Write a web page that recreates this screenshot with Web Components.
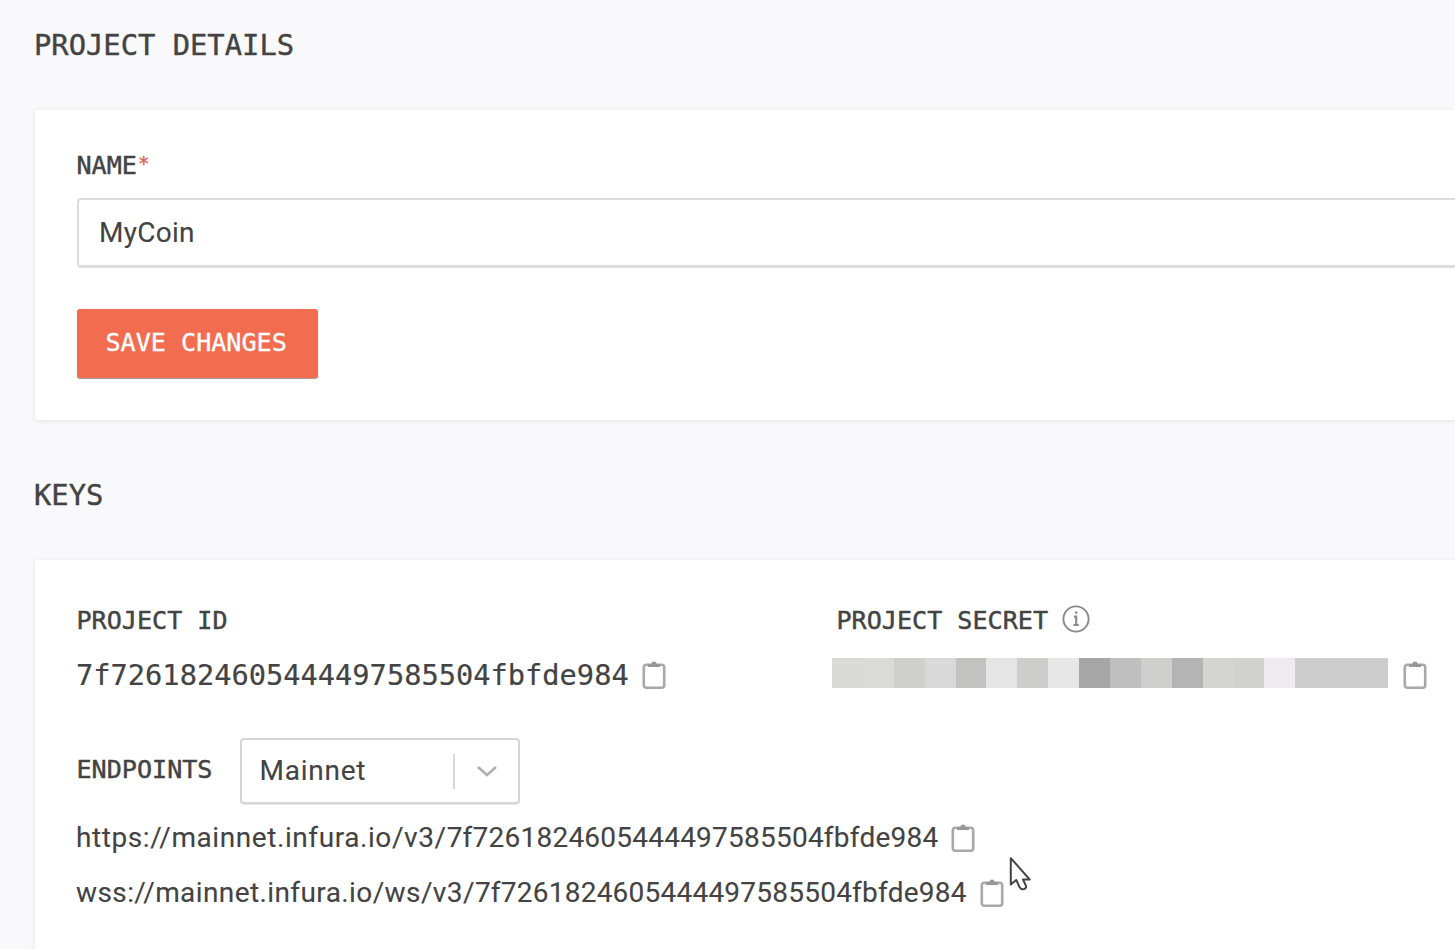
<!DOCTYPE html>
<html lang="en">
<head>
<meta charset="utf-8">
<title>Project settings</title>
<style>
html, body { margin: 0; height: 949px; overflow: hidden; background: #f9f8fa; }
</style>
</head>
<body>
<settings-page></settings-page>
<script>
const define = (name, html) => {
  const t = document.createElement('template');
  t.innerHTML = html;
  customElements.define(name, class extends HTMLElement {
    constructor() {
      super();
      this.attachShadow({ mode: 'open' }).append(t.content.cloneNode(true));
    }
  });
};

define('section-title', `<style>
:host { display: block; margin-left: -1px; font: 28.8px/40px "DejaVu Sans Mono", monospace; color: #434343; white-space: pre; -webkit-text-stroke: .4px; }
</style><slot></slot>`);

define('panel-card', `<style>
:host { display: block; box-sizing: border-box; background: #fff; padding: 40px 0 41px 42px; border-radius: 2px 0 0 2px; box-shadow: 0 1px 5px rgba(60,50,70,.11); }
</style><slot></slot>`);

define('field-label', `<style>
:host { display: block; margin-left: -.5px; font: 25.1px/32px "DejaVu Sans Mono", monospace; color: #434343; white-space: pre; -webkit-text-stroke: .45px; }
</style><slot></slot>`);

define('required-mark', `<style>
:host { display: inline-block; color: #d9695a; font-size: 19px; line-height: 1; vertical-align: 4px; margin-left: 1px; }
</style>*`);

define('text-field', `<style>
:host { display: block; box-sizing: border-box; height: 70px; border: 2px solid #dddbdb; border-bottom: 3px solid #dfdedf; border-right: 0; border-radius: 4px 0 0 4px; padding-left: 20px; font: 28px/65px Roboto, sans-serif; letter-spacing: .25px; color: #434343; -webkit-text-stroke: .1px; }
</style><slot></slot>`);

define('primary-button', `<style>
:host { display: block; box-sizing: border-box; width: 241px; height: 69px; border-radius: 3px; background: #f26c50; color: #fff; padding-left: 28.5px; font: 25.1px/67px "DejaVu Sans Mono", monospace; box-shadow: 0 1px 1px rgba(0,0,0,.4); -webkit-text-stroke: .35px; }
</style><slot></slot>`);

define('copy-icon', `<style>
:host { display: block; width: 24px; height: 30px; flex: none; }
svg { display: block; }
</style><svg width="24" height="30" viewBox="0 0 24 30"><rect x="1.8" y="4.8" width="20.4" height="23" rx="2.5" fill="none" stroke="#a9a7a7" stroke-width="2.6"/><path d="M6 7V4.8L9.5 3.8Q9.8 1.4 12 1.4t2.5 2.4L18 4.8V7z" fill="#989696"/></svg>`);

define('info-icon', `<style>
:host { display: block; flex: none; }
svg { display: block; }
</style><svg width="28" height="28" viewBox="0 0 28 28" fill="none" stroke="#8b8a8a"><circle cx="14" cy="14" r="12.6" stroke-width="1.9"/><path d="M12 11.6h2.2v8M11.4 20h5.4M13 7.6h2.4" stroke-width="2.1"/></svg>`);

define('mono-value', `<style>
:host { display: block; margin-left: -1px; font: 28.7px/40px "DejaVu Sans Mono", monospace; color: #434343; -webkit-text-stroke: .2px; }
</style><slot></slot>`);

define('endpoint-row', `<style>
:host { display: flex; align-items: center; gap: 13px; height: 55px; margin-left: -1px; font: 28px/40px Roboto, sans-serif; color: #434343; white-space: nowrap; -webkit-text-stroke: .1px; }
.base { letter-spacing: var(--track); }
.key { letter-spacing: .23px; }
</style><div><span class="base"><slot name="base"></slot></span><span class="key"><slot></slot></span></div><copy-icon></copy-icon>`);

define('network-select', `<style>
:host { display: flex; align-items: center; box-sizing: border-box; width: 280px; height: 66px; border: 2px solid #d6d5d5; border-radius: 4px; box-shadow: 0 1px 1px rgba(0,0,0,.1); padding-left: 17.5px; font: 28px/58px Roboto, sans-serif; letter-spacing: .75px; color: #434343; }
span { width: 193.5px; -webkit-text-stroke: .1px; } i { width: 2px; height: 35px; background: #d9d8d8; }
svg { margin-left: 21px; }
</style><span><slot></slot></span><i></i><svg width="22" height="14" viewBox="0 0 22 14"><path d="M2 3l9 8 9-8" fill="none" stroke="#b0aeae" stroke-width="2.6"/></svg>`);

customElements.define('redacted-value', class extends HTMLElement {
  constructor() {
    super();
    const tones = ['d9d9d8','dadad9','cfcfce','d9d9d9','c2c2c1','e6e5e5','cdcdcc','e8e7e7','a6a6a6','bfbfbf','cececd','b4b4b4','d4d4d3','d1d1d0','edebed','cecdcd','cecdcd','cecdcd'];
    this.attachShadow({ mode: 'open' }).innerHTML = `<style>
:host { display: grid; grid-template-columns: repeat(18, 1fr); width: 556px; height: 30px; margin-top: -4px; }
</style>` + tones.map(c => `<i style="background:#${c}"></i>`).join('');
  }
});

define('mouse-cursor', `<style>
:host { position: absolute; left: 1008px; top: 855px; }
svg { display: block; }
</style><svg width="26" height="40" viewBox="0 0 26 40"><path d="M2.8 3.2v26.3l5.4-4.5c1.8 2 2.2 8.3 5.8 9.2 2.6.6 5-1.4 3.6-4.2L15 24.6h6.8z" fill="#fff" stroke="#434245" stroke-width="2" stroke-linejoin="round"/></svg>`);

define('settings-page', `<style>
:host { display: block; box-sizing: border-box; height: 949px; padding: 25px 0 0 35px; overflow: hidden; }
.first { margin-top: 45px; height: 310px; }
text-field { margin-top: 16px; }
primary-button { margin-top: 41px; }
.keys { margin-top: 55px; }
.second { margin-top: 45px; height: 420px; padding-top: 45px; }
.cols { display: grid; grid-template-columns: 760px 1fr; }
.row { display: flex; align-items: center; }
.id { height: 40px; margin-top: 18px; gap: 13px; }
.secret { height: 40px; margin: 18px 0 0 -5px; gap: 15px; }
.lab { height: 32px; gap: 14px; }
.lab info-icon { margin-top: -4px; }
.ends { margin-top: 43px; gap: 27.5px; height: 66px; }
.ends field-label { margin-top: -2px; }
.urls { margin-top: 6px; }
</style>
<section-title>PROJECT DETAILS</section-title>
<panel-card class="first">
  <field-label style="height:32px">NAME<required-mark></required-mark></field-label>
  <text-field>MyCoin</text-field>
  <primary-button>SAVE CHANGES</primary-button>
</panel-card>
<section-title class="keys">KEYS</section-title>
<panel-card class="second">
  <div class="cols">
    <div>
      <div class="row lab"><field-label>PROJECT ID</field-label></div>
      <div class="row id"><mono-value>7f7261824605444497585504fbfde984</mono-value><copy-icon></copy-icon></div>
    </div>
    <div>
      <div class="row lab"><field-label>PROJECT SECRET</field-label><info-icon></info-icon></div>
      <div class="row secret"><redacted-value></redacted-value><copy-icon></copy-icon></div>
    </div>
  </div>
  <div class="row ends"><field-label>ENDPOINTS</field-label><network-select>Mainnet</network-select></div>
  <div class="urls">
    <endpoint-row style="--track:.58px"><span slot="base">https://mainnet.infura.io/v3/</span>7f7261824605444497585504fbfde984</endpoint-row>
    <endpoint-row style="--track:.4px"><span slot="base">wss://mainnet.infura.io/ws/v3/</span>7f7261824605444497585504fbfde984</endpoint-row>
  </div>
</panel-card>
<mouse-cursor></mouse-cursor>`);
</script>
</body>
</html>
